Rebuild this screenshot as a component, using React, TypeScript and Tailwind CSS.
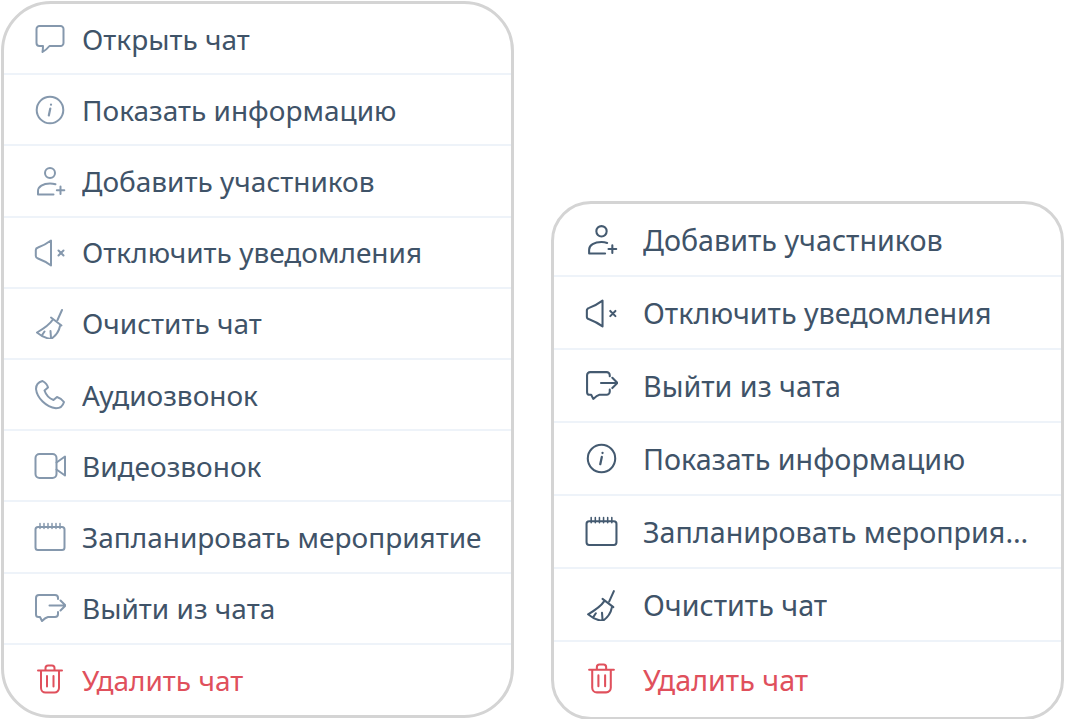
import React from 'react';

type IconName = 'chat' | 'info' | 'add' | 'mute' | 'broom' | 'phone' | 'video' | 'calendar' | 'leave' | 'trash';

const Icon = ({ name, className }: { name: IconName; className: string }) => {
  const paths: Record<IconName, React.ReactNode> = {
    chat: <path d="M5.500 3h21a3 3 0 0 1 3 3v14a3 3 0 0 1-3 3H15.500c-2 2.500-4.500 4.500-7 6 .4-2 .5-4 .5-6H5.500a3 3 0 0 1-3-3V6a3 3 0 0 1 3-3z" />,
    info: (
      <>
        <circle cx="16" cy="16" r="13.300" />
        <path d="M17 10.500v.2M16.300 14.500l-1.500 7" strokeWidth="2.200" />
      </>
    ),
    add: (
      <>
        <circle cx="16" cy="8" r="5" />
        <path d="M21.500 19.300c-1.600-.5-3.500-.8-5.500-.8-7 0-12 3-12 7.500v3.500h15.500M26.500 21.500v7.500M22.800 25.200h7.500" />
      </>
    ),
    mute: (
      <>
        <path d="M17 4.500v25c-4-3-9-5.500-13-7-1.500-.5-2.200-1-2.200-2.500v-6c0-1.500.7-2 2.200-2.500 4-1.500 9-4 13-7z" />
        <path d="M24.500 14.500l5 5M29.500 14.500l-5 5" />
      </>
    ),
    broom: (
      <>
        <path d="M28 3L23.500 13M17 10.500l10.500 8" />
        <path d="M18.500 13C15 18.500 9 22 3 25.500c3.500 3 8 5.500 14 6.500 4.500-3 8-7.500 9-13M10.500 24.500l-2 3M16.500 24l.5 7" />
      </>
    ),
    phone: <path d="M8.500 2C4.500 3 2 6 2 10c1 9 10 18 20 19.300 4 0 7-2.800 8-6.300-1.500-2-4-4-7-5l-3.500 3c-4-1.500-7.500-5-9-9.500l3.500-3C13.500 6 11 3.500 8.500 2z" />,
    video: (
      <>
        <rect x="1.500" y="4" width="21" height="24" rx="4" />
        <path d="M22.500 12.500L31 6.500v19L22.500 19.500" />
      </>
    ),
    calendar: (
      <>
        <rect x="1.500" y="6" width="29" height="23" rx="2.500" />
        <path d="M6 2.500v5M10 2.500v5M14 2.500v5M18 2.500v5M22 2.500v5M26 2.500v5" strokeWidth="1.500" />
      </>
    ),
    leave: (
      <>
        <path d="M24 7V6a3 3 0 0 0-3-3H5a3 3 0 0 0-3 3v16.500A2.500 2.500 0 0 0 4.500 25H6l2 4c2-2 3.500-3.500 6-4h7a3 3 0 0 0 3-3v-2" />
        <path d="M15.500 13.500H31M26.500 8.500l5 5-5 5" />
      </>
    ),
    trash: (
      <>
        <path d="M4 6.500h24M11.500 6V4a2.500 2.500 0 0 1 2.500-2.500h4A2.500 2.500 0 0 1 20.500 4v2" />
        <path d="M7 7v17a4.500 4.500 0 0 0 4.500 4.500h9A4.500 4.500 0 0 0 25 24V7M13 12v10.500M19.500 12v10.500" />
      </>
    ),
  };
  return (
    <svg viewBox="0 0 32 32" fill="none" stroke="currentColor" strokeWidth="2" strokeLinecap="round" strokeLinejoin="round" className={className}>
      {paths[name]}
    </svg>
  );
};

const leftItems: { icon: IconName; label: string }[] = [
  { icon: 'chat', label: 'Открыть чат' },
  { icon: 'info', label: 'Показать информацию' },
  { icon: 'add', label: 'Добавить участников' },
  { icon: 'mute', label: 'Отключить уведомления' },
  { icon: 'broom', label: 'Очистить чат' },
  { icon: 'phone', label: 'Аудиозвонок' },
  { icon: 'video', label: 'Видеозвонок' },
  { icon: 'calendar', label: 'Запланировать мероприятие' },
  { icon: 'leave', label: 'Выйти из чата' },
];

const rightItems: { icon: IconName; label: string }[] = [
  { icon: 'add', label: 'Добавить участников' },
  { icon: 'mute', label: 'Отключить уведомления' },
  { icon: 'leave', label: 'Выйти из чата' },
  { icon: 'info', label: 'Показать информацию' },
  { icon: 'calendar', label: 'Запланировать мероприятие' },
  { icon: 'broom', label: 'Очистить чат' },
];

const App = () => {
  return (
    <div className="flex h-[719px] w-[1065px] items-start bg-white pl-[1px] pt-[1px] font-['Noto_Sans',sans-serif] text-[#3f5368]">
      {/* Left menu */}
      <div className="flex w-[513px] flex-col rounded-[50px] border-[3px] border-[#d4d4d4] text-[28px]">
        {leftItems.map((item) => (
          <div key={item.label} className="flex h-[71.200px] items-center gap-[16px] border-b-2 border-[#eef3f9] pl-[30px]">
            <Icon name={item.icon} className="h-[32px] w-[32px] text-[#8598ad]" />
            <span className="truncate">{item.label}</span>
          </div>
        ))}
        <div className="flex h-[70px] items-center gap-[16px] pl-[30px] text-[#e0505c]">
          <Icon name="trash" className="h-[32px] w-[32px]" />
          <span>Удалить чат</span>
        </div>
      </div>

      {/* Right menu */}
      <div className="ml-[37px] mt-[200px] flex w-[513px] flex-col rounded-[40px] border-[3px] border-[#d4d4d4] text-[28.700px]">
        {rightItems.map((item) => (
          <div key={item.label} className="flex h-[73px] items-center gap-[25px] border-b-2 border-[#eef3f9] pl-[31px] pr-[31px]">
            <Icon name={item.icon} className="h-[33px] w-[33px] shrink-0 text-[#445a70]" />
            <span className="truncate">{item.label}</span>
          </div>
        ))}
        <div className="flex h-[75px] items-center gap-[25px] pl-[31px] text-[#e0505c]">
          <Icon name="trash" className="h-[33px] w-[33px]" />
          <span>Удалить чат</span>
        </div>
      </div>
    </div>
  );
};

export default App;
